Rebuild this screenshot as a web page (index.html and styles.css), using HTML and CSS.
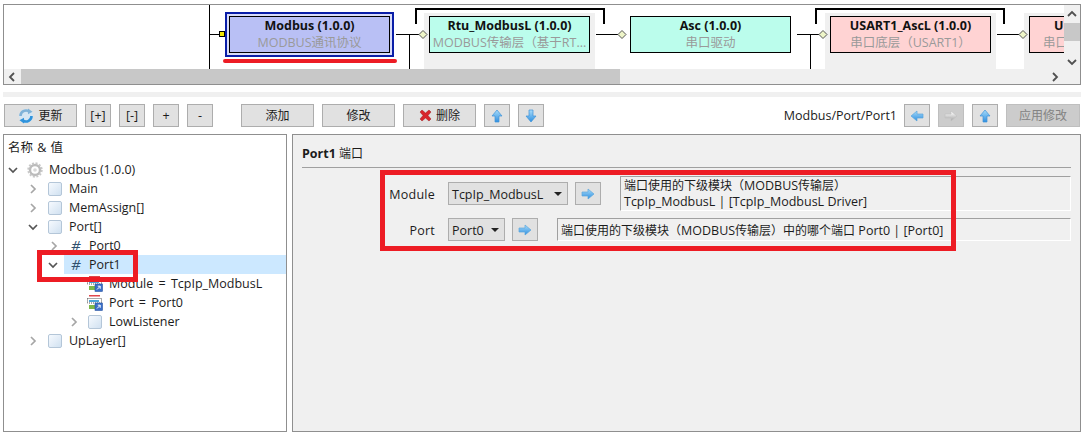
FILE: index.html
```html
<!DOCTYPE html>
<html lang="zh">
<head>
<meta charset="utf-8">
<title>Modbus</title>
<link rel="stylesheet" href="styles.css">
</head>
<body>
<svg width="0" height="0" class="defs">
  <defs>
    <linearGradient id="blueg" x1="0" y1="0" x2="0" y2="1"><stop offset="0" stop-color="#a8dcfa"/><stop offset="1" stop-color="#2f8fe0"/></linearGradient>
    <linearGradient id="boxg" x1="0" y1="0" x2="1" y2="1"><stop offset="0" stop-color="#f8fbff"/><stop offset="1" stop-color="#cfe0f0"/></linearGradient>
    <symbol id="arr-right" viewBox="0 0 14 12"><path d="M1 4h6V1l6 5-6 5V8H1z" fill="url(#blueg)" stroke="#5ba6dc" stroke-width=".7"/></symbol>
    <symbol id="arr-left" viewBox="0 0 14 12"><path d="M13 4H7V1L1 6l6 5V8h6z" fill="url(#blueg)" stroke="#5ba6dc" stroke-width=".7"/></symbol>
    <symbol id="arr-up" viewBox="0 0 12 14"><path d="M4 13V7H1l5-6 5 6H8v6z" fill="url(#blueg)" stroke="#3f93d8" stroke-width=".7"/></symbol>
    <symbol id="arr-down" viewBox="0 0 12 14"><path d="M4 1v6H1l5 6 5-6H8V1z" fill="url(#blueg)" stroke="#3f93d8" stroke-width=".7"/></symbol>
    <symbol id="box" viewBox="0 0 14 14"><rect x=".5" y=".5" width="13" height="13" rx="1.500" fill="url(#boxg)" stroke="#b4c6d8"/></symbol>
    <symbol id="chev-r" viewBox="0 0 8 10"><path d="M2 1l4 4-4 4" fill="none" stroke="#a6a6a6" stroke-width="1.700"/></symbol>
    <symbol id="chev-d" viewBox="0 0 10 8"><path d="M1 2l4 4 4-4" fill="none" stroke="#555" stroke-width="1.700"/></symbol>
    <symbol id="sb-r" viewBox="0 0 8 10"><path d="M2 1l4 4-4 4" fill="none" stroke="#505050" stroke-width="1.800"/></symbol>
    <symbol id="sb-d" viewBox="0 0 10 8"><path d="M1 2l4 4 4-4" fill="none" stroke="#505050" stroke-width="1.800"/></symbol>
    <symbol id="port" viewBox="0 0 16 16">
      <rect x="2" y="0" width="11" height="1.500" fill="#e0474c"/>
      <rect x=".5" y="3.500" width="14" height="4.500" fill="#fff" stroke="#555" stroke-width="1" stroke-dasharray="1 1"/>
      <rect x="2" y="5" width="10" height="2" fill="#49a5d8"/>
      <rect x="2" y="10" width="7" height="4" fill="#7cb84a"/>
      <rect x="8" y="8" width="7.500" height="7.500" fill="#3a6fc8" stroke="#2c55a0" stroke-width=".6"/>
      <path d="M10 13.500l3-3M10.800 10.200H13.200V12.800" fill="none" stroke="#fff" stroke-width="1"/>
    </symbol>
  </defs>
</svg>

<section class="diagram">
  <div class="node-shade shade-rtu"></div>
  <div class="node-shade shade-usart"></div>
  <div class="node-shade shade-next"></div>
  <svg class="wires" width="1062" height="64" viewBox="0 0 1062 64">
    <g fill="none" stroke="#000" stroke-width="1">
      <path d="M205.500 0V64M205 29.500H216"/>
      <path d="M392 29.500H415M405.500 29.500V64"/>
      <path d="M592 29.500H614"/>
      <path d="M793 29.500H815M806.500 29.500V64"/>
      <path d="M993 29.500H1015"/>
    </g>
    <g fill="none" stroke="#000" stroke-width="2">
      <path d="M412 19V4H600V19"/>
      <path d="M812 19V4H1000V19"/>
    </g>
    <rect x="215.500" y="26.500" width="5" height="5" fill="#f2e600" stroke="#000"/>
    <g fill="#eef5c8" stroke="#555">
      <path d="M419 25.500l4 4-4 4-4-4z"/>
      <path d="M618 25.500l4 4-4 4-4-4z"/>
      <path d="M819 25.500l4 4-4 4-4-4z"/>
      <path d="M1019 25.500l4 4-4 4-4-4z"/>
    </g>
  </svg>
  <div class="node-sel">
    <div class="node node-blue">
      <b>Modbus (1.0.0)</b><span>MODBUS通讯协议</span>
    </div>
  </div>
  <div class="node node-green n-rtu"><b>Rtu_ModbusL (1.0.0)</b><span>MODBUS传输层（基于RT...</span></div>
  <div class="node node-green n-asc"><b>Asc (1.0.0)</b><span>串口驱动</span></div>
  <div class="node node-pink n-usart"><b>USART1_AscL (1.0.0)</b><span>串口底层（USART1）</span></div>
  <div class="node node-pink n-next"><b>U</b><span>串口</span></div>
  <div class="red-line"></div>
  <div class="vbar">
    <svg class="sb-icon flip-y" width="10" height="8"><use href="#sb-d"/></svg>
    <span class="vthumb"></span>
    <span class="vspace"></span>
    <svg class="sb-icon" width="10" height="8"><use href="#sb-d"/></svg>
  </div>
  <div class="hbar">
    <svg class="sb-icon flip-x" width="8" height="10"><use href="#sb-r"/></svg>
    <span class="hthumb"></span>
    <span class="vspace"></span>
    <svg class="sb-icon" width="8" height="10"><use href="#sb-r"/></svg>
  </div>
</section>

<div class="strip"></div>

<nav class="toolbar">
  <button class="btn b-wide zh">
    <svg width="16" height="16" viewBox="0 0 16 16"><circle cx="8" cy="8" r="7" fill="#d5e6f3"/><path d="M2.500 8A5.500 5.500 0 0 1 11 3.400" fill="none" stroke="#7fb2d8" stroke-width="2.600"/><path d="M10 .5l4.500 3.200-4.500 2.600z" fill="#7fb2d8"/><path d="M13.500 8A5.500 5.500 0 0 1 5 12.600" fill="none" stroke="#2f93dc" stroke-width="2.600"/><path d="M6 15.500L1.500 12.300 6 9.700z" fill="#2f93dc"/></svg>更新
  </button>
  <button class="btn b-sq">[+]</button>
  <button class="btn b-sq">[-]</button>
  <button class="btn b-sq">+</button>
  <button class="btn b-sq gap-after">-</button>
  <button class="btn b-wide zh">添加</button>
  <button class="btn b-wide zh">修改</button>
  <button class="btn b-wide zh">
    <svg width="13" height="13" viewBox="0 0 13 13"><path d="M1 3l2-2 3.500 3L10 1l2 2-3 3.500 3 3.500-2 2-3.500-3L3 12l-2-2 3-3.500z" fill="#d8262c" stroke="#a01c20" stroke-width=".5"/></svg>删除
  </button>
  <button class="btn b-sq"><svg width="12" height="14"><use href="#arr-up"/></svg></button>
  <button class="btn b-sq"><svg width="12" height="14"><use href="#arr-down"/></svg></button>
  <span class="path">Modbus/Port/Port1</span>
  <button class="btn b-sq"><svg width="14" height="12"><use href="#arr-left"/></svg></button>
  <button class="btn b-sq off"><svg width="14" height="12" class="gray"><use href="#arr-right"/></svg></button>
  <button class="btn b-sq"><svg width="12" height="14"><use href="#arr-up"/></svg></button>
  <button class="btn b-wide off b-apply zh">应用修改</button>
</nav>

<main class="split">
  <aside class="tree">
    <div class="tree-head">名称 &amp; 值</div>
    <div class="row l0"><svg class="tw" width="10" height="8"><use href="#chev-d"/></svg>
      <svg class="ic" width="16" height="16" viewBox="0 0 16 16"><circle cx="8" cy="8" r="5" fill="none" stroke="#bcbcbc" stroke-width="2.400"/><circle cx="8" cy="8" r="6.800" fill="none" stroke="#c8c8c8" stroke-width="1.800" stroke-dasharray="2 1.600"/><circle cx="8" cy="8" r="1.800" fill="#d8d8d8"/></svg>
      <span>Modbus (1.0.0)</span></div>
    <div class="row l1"><svg class="tw" width="8" height="10"><use href="#chev-r"/></svg><svg class="ic" width="14" height="14"><use href="#box"/></svg><span>Main</span></div>
    <div class="row l1"><svg class="tw" width="8" height="10"><use href="#chev-r"/></svg><svg class="ic" width="14" height="14"><use href="#box"/></svg><span>MemAssign[]</span></div>
    <div class="row l1 open"><svg class="tw" width="10" height="8"><use href="#chev-d"/></svg><svg class="ic" width="14" height="14"><use href="#box"/></svg><span>Port[]</span></div>
    <div class="row l2"><svg class="tw" width="8" height="10"><use href="#chev-r"/></svg><span class="hash">#</span><span>Port0</span></div>
    <div class="row selected"><svg class="tw" width="10" height="8"><use href="#chev-d"/></svg><span class="sel-fill"><span class="hash">#</span><span>Port1</span></span></div>
    <div class="row l3"><svg class="ic" width="16" height="16"><use href="#port"/></svg><span>Module = TcpIp_ModbusL</span></div>
    <div class="row l3"><svg class="ic" width="16" height="16"><use href="#port"/></svg><span>Port = Port0</span></div>
    <div class="row l3b"><svg class="tw" width="8" height="10"><use href="#chev-r"/></svg><svg class="ic" width="14" height="14"><use href="#box"/></svg><span>LowListener</span></div>
    <div class="row l1"><svg class="tw" width="8" height="10"><use href="#chev-r"/></svg><svg class="ic" width="14" height="14"><use href="#box"/></svg><span>UpLayer[]</span></div>
    <div class="red-box"></div>
  </aside>

  <section class="props">
    <h2 class="props-title"><b>Port1</b> <span class="zh">端口</span></h2>
    <div class="form-row first">
      <label class="lbl">Module</label>
      <div class="select s-module">TcpIp_ModbusL<i class="caret"></i></div>
      <button class="btn go"><svg width="14" height="12"><use href="#arr-right"/></svg></button>
      <div class="desc d-module"><span class="zh">端口使用的下级模块（</span>MODBUS<span class="zh">传输层）</span><br>TcpIp_ModbusL | [TcpIp_ModbusL Driver]</div>
    </div>
    <div class="form-row">
      <label class="lbl">Port</label>
      <div class="select s-port">Port0<i class="caret"></i></div>
      <button class="btn go"><svg width="14" height="12"><use href="#arr-right"/></svg></button>
      <div class="desc d-port"><span class="zh">端口使用的下级模块（</span>MODBUS<span class="zh">传输层）中的哪个端口</span> Port0 | [Port0]</div>
    </div>
    <div class="red-form"></div>
  </section>
</main>
</body>
</html>
```
FILE: styles.css
```css
* { box-sizing: border-box; }
html, body { margin: 0; padding: 0; }
body {
  width: 1083px;
  height: 437px;
  overflow: hidden;
  background: #fff;
  color: #1c1c1c;
  font: 12.500px/15px "Open Sans", "Noto Sans CJK SC", sans-serif;
}
.defs { position: absolute; }
.zh { font-size: 12px; }

/* diagram */
.diagram {
  position: relative;
  margin: 4px 2px 0 3px;
  height: 81px;
  border: 1px solid #8f8f8f;
  overflow: hidden;
}
.wires { position: absolute; left: 0; top: 0; }
.node-shade { position: absolute; top: 8px; height: 56px; background: #f0f0f0; }
.shade-rtu { left: 420px; width: 171px; }
.shade-usart { left: 821px; width: 171px; }
.shade-next { left: 1020px; width: 40px; }
.node {
  display: flex;
  flex-direction: column;
  align-items: center;
  height: 37px;
  border: 1px solid #000;
  white-space: nowrap;
  overflow: hidden;
  font-size: 12.500px;
  line-height: 18px;
}
.node b { height: 17px; color: #111; font-weight: 700; }
.node span { color: #9a9a9a; }
.node-blue { background: #b9c0f5; }
.node-green { background: #bbfdec; }
.node-pink { background: #ffd3d3; }
.node-sel {
  position: absolute;
  left: 221px;
  top: 7px;
  width: 169px;
  height: 45px;
  padding: 2px;
  border: 2px solid #0a1ea8;
  background: #d8dcf8;
}
.n-rtu, .n-asc, .n-usart, .n-next { position: absolute; top: 11px; width: 161px; }
.n-rtu { left: 425px; }
.n-asc { left: 626px; }
.n-usart { left: 826px; }
.n-next { left: 1025px; width: 40px; align-items: flex-start; border-right: 0; }
.n-next b { margin-left: 24px; }
.n-next span { margin-left: 13px; }
.red-line {
  position: absolute;
  left: 219px;
  top: 54px;
  width: 174px;
  height: 4px;
  border-radius: 2px;
  background: #ed1c24;
}
.hbar {
  position: absolute;
  left: 0;
  right: 0;
  bottom: 0;
  height: 15px;
  display: flex;
  align-items: center;
  background: #f0f0f0;
  z-index: 2;
}
.hbar .sb-icon:first-child { margin: 0 5px 0 4px; }
.hbar .sb-icon:last-child { margin-right: 21px; }
.flip-x { transform: scaleX(-1); }
.flip-y { transform: scaleY(-1); }
.hthumb { width: 599px; height: 15px; background: #c8c8c8; }
.vspace { flex: 1; }
.vbar {
  position: absolute;
  right: 0;
  top: 0;
  bottom: 15px;
  width: 16px;
  display: flex;
  flex-direction: column;
  align-items: center;
  background: #f0f0f0;
  z-index: 2;
}
.vbar .sb-icon:first-child { margin: 5px 0 5px; }
.vbar .sb-icon:last-child { margin-bottom: 3px; }
.vthumb { width: 16px; height: 18px; background: #c8c8c8; }

.strip { height: 5px; margin: 7px 2px 0 3px; background: #f0f0f0; }

/* toolbar */
.toolbar {
  display: flex;
  align-items: center;
  gap: 8px;
  margin: 7px 3px 0 4px;
  height: 23px;
}
.btn {
  display: inline-flex;
  align-items: center;
  justify-content: center;
  gap: 4px;
  height: 23px;
  padding: 0;
  border: 1px solid #adadad;
  background: #e1e1e1;
  color: #1c1c1c;
  font-family: inherit;
  font-size: 12.500px;
  line-height: 15px;
}
.btn.zh { font-size: 12px; }
.b-wide { width: 73px; }
.b-sq { width: 26px; }
.gap-after { margin-right: 20px; }
.path { margin-left: auto; margin-right: -1px; }
.off { background: #cccccc; border-color: #bfbfbf; color: #838383; }
.gray { filter: grayscale(1) brightness(1.25); }
.b-apply { width: 74px; }

/* panes */
.split {
  display: flex;
  gap: 5px;
  margin: 7px 2px 0 3px;
  height: 298px;
}
.tree {
  position: relative;
  width: 284px;
  border: 1px solid #8f8f8f;
  padding: 4px 0 0 0;
  background: #fff;
}
.tree-head { height: 21px; padding-left: 4px; line-height: 17px; word-spacing: 1px; }
.row { display: flex; align-items: center; height: 19px; white-space: nowrap; }
.row span { display: block; }
.tw { flex: none; }
.ic { flex: none; margin-right: 7px; }
.l0 { padding-left: 4px; }
.l0 .tw { margin-right: 9px; }
.l0 .ic { margin-right: 6px; }
.l1 { padding-left: 25px; }
.l1 .tw { margin-right: 11px; }
.open { padding-left: 24px; }
.open .tw { margin-right: 10px; }
.l2 { padding-left: 46px; }
.l2 .tw { margin-right: 13px; }
.hash { width: 18px; color: #30506e; font-size: 15px; font-style: italic; }
.selected { padding-left: 44px; }
.selected .tw { margin-right: 6px; }
.sel-fill {
  display: flex !important;
  flex: 1;
  align-items: center;
  height: 19px;
  padding-left: 7px;
  background: #cce8ff;
}
.l3 { padding-left: 83px; word-spacing: 2px; }
.l3 .ic { margin-right: 6px; }
.l3b { padding-left: 66px; }
.l3b .tw { margin-right: 10px; }
.red-box {
  position: absolute;
  left: 33px;
  top: 115px;
  width: 101px;
  height: 32px;
  border: 5px solid #ed1c24;
}

.props {
  position: relative;
  flex: 1;
  border: 1px solid #8f8f8f;
  background: #f0f0f0;
  padding: 10px 9px 0 9px;
}
.props-title {
  margin: 0;
  height: 23px;
  border-bottom: 1px solid #a0a0a0;
  font-size: 12.500px;
  font-weight: 400;
  line-height: 17px;
}
.form-row {
  display: flex;
  align-items: center;
  gap: 7px;
  margin-top: 8px;
  height: 35px;
}
.form-row + .form-row { height: 23px; margin-top: 7px; }
.lbl { width: 135px; margin-right: 4px; padding: 1px 2px 0 0; text-align: right; letter-spacing: .25px; }
.select {
  display: flex;
  align-items: center;
  justify-content: space-between;
  height: 23px;
  padding: 1px 5px 0 3px;
  border: 1px solid #adadad;
  background: #e1e1e1;
}
.s-module { width: 120px; }
.s-port { width: 57px; }
.caret { width: 0; height: 0; margin-top: -1px; border: 4px solid transparent; border-top: 4px solid #222; border-bottom: 0; }
.go { width: 26px; }
.desc {
  flex: 1;
  border-top: 1px solid #a0a0a0;
  border-left: 1px solid #a0a0a0;
  border-bottom: 1px solid #fff;
  border-right: 1px solid #fff;
  padding-left: 3px;
}
.d-module { height: 35px; margin-left: 12px; line-height: 16px; padding-top: 1px; }
.d-port { height: 23px; margin-left: 12px; line-height: 23px; }
.red-form {
  position: absolute;
  left: 87px;
  top: 35px;
  width: 576px;
  height: 81px;
  border: 5px solid #ed1c24;
}
```
